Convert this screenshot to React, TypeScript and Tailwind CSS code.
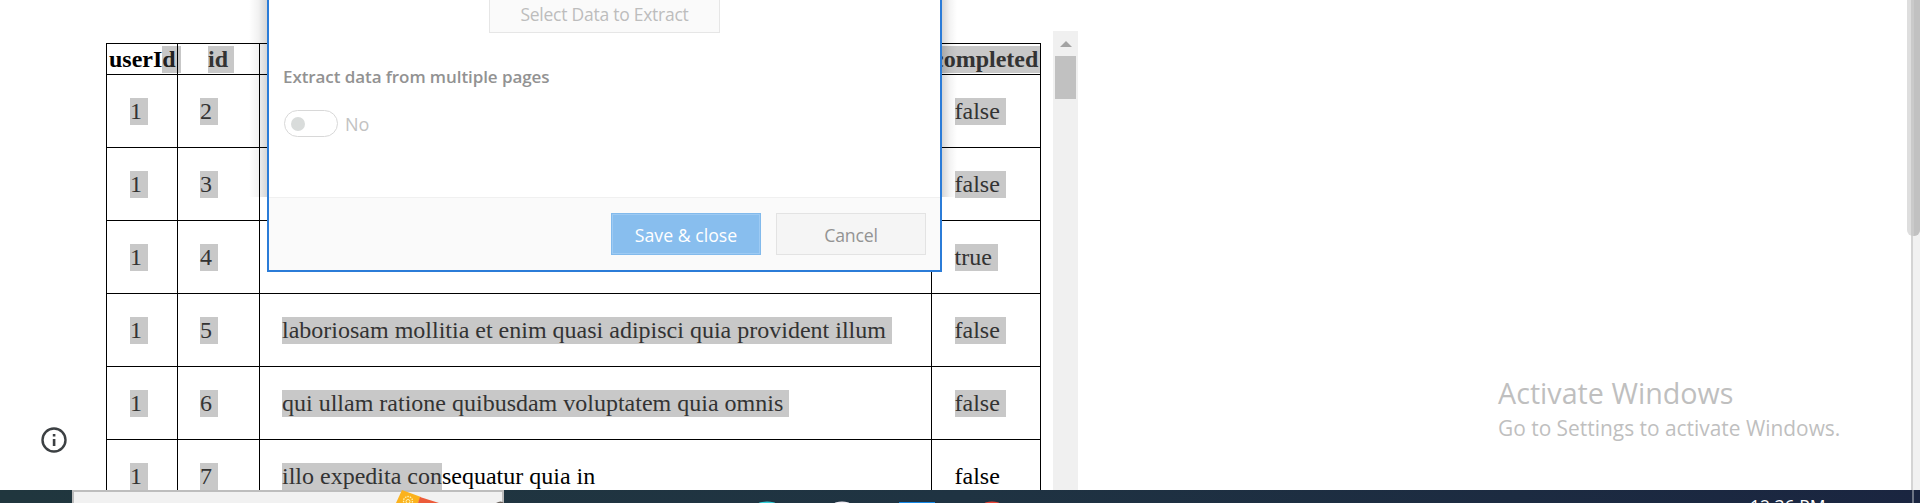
import React from "react";

const rows: { id: string; title: React.ReactNode; done: string; sel: boolean }[] = [
  { id: "2", title: "", done: "false", sel: true },
  { id: "3", title: "", done: "false", sel: true },
  { id: "4", title: "", done: "true", sel: true },
  { id: "5", title: <Mark>laboriosam mollitia et enim quasi adipisci quia provident illum </Mark>, done: "false", sel: true },
  { id: "6", title: <Mark>qui ullam ratione quibusdam voluptatem quia omnis </Mark>, done: "false", sel: true },
  { id: "7", title: <><Mark>illo expedita con</Mark>sequatur quia in</>, done: "false", sel: false },
];

function Mark({ children }: { children: React.ReactNode }) {
  return <span className="inline-block h-[27px] bg-[#c8c8c8] text-[#333] whitespace-pre">{children}</span>;
}

const cell = "border-r border-black shrink-0 whitespace-pre";

function DataTable() {
  return (
    <div className="ml-[106px] mt-[43px] w-[935px] shrink-0 border-l border-t border-black font-['Liberation_Serif',serif] text-[24px] leading-[27px] text-black">
      <div className="flex h-[31px] border-b border-black font-bold">
        <div className={`${cell} w-[71px] pl-[2px] pt-[2px]`}>userI<span className="relative inline-block h-[27px] w-[19px] bg-black/22 text-[#222]">d</span></div>
        <div className={`${cell} w-[82px] pl-[30px] pt-[2px]`}><Mark>id </Mark></div>
        <div className={`${cell} w-[672px]`} />
        <div className={`${cell} w-[109px] pt-[2px]`}><span className="block h-[27px] bg-[#c8c8c8] pl-[1px] text-[#333]">completed</span></div>
      </div>
      {rows.map((r) => (
        <div key={r.id} className="flex h-[73px] border-b border-black">
          <div className={`${cell} w-[71px] pl-[23px] pt-[23px]`}><Mark>1 </Mark></div>
          <div className={`${cell} w-[82px] pl-[22px] pt-[23px]`}><Mark>{r.id + " "}</Mark></div>
          <div className={`${cell} w-[672px] pl-[22px] pt-[23px]`}>{r.title}</div>
          <div className={`${cell} w-[109px] pl-[22.5px] pt-[23px]`}>{r.sel ? <Mark>{r.done + " "}</Mark> : r.done}</div>
        </div>
      ))}
    </div>
  );
}

function Dialog() {
  return (
    <div className="absolute left-[249px] top-0 flex">
      <div className="h-[197px] w-[18px] bg-linear-to-r from-black/0 via-black/5 to-black/16" />
      <div className="flex h-[272px] w-[675px] flex-col border-x-2 border-b-2 border-[#2b7cd8] bg-white font-['Open_Sans',sans-serif]">
        <div className="ml-[220px] flex h-[33px] w-[231px] items-start justify-center border-x border-b border-[#e6e6e6] bg-[#fafafa] text-[17.5px] leading-[28px] tracking-[-0.25px] text-[#bdbdbd]">
          <span className="whitespace-nowrap">Select Data to Extract</span>
        </div>
        <div className="ml-[14px] mt-[31px] h-[26px] whitespace-nowrap text-[17px] font-semibold leading-[26px] tracking-[-0.08px] text-[#929292]"><span>Extract data from multiple pages</span></div>
        <div className="ml-[15px] mt-[20px] flex h-[27px] items-center">
          <div className="flex h-[27px] w-[54px] items-center rounded-full border border-[#d8d8d8] pl-[6px]">
            <div className="size-[14px] rounded-full bg-[#d9dcdb]" />
          </div>
          <span className="ml-[7px] mt-[2px] text-[18px] leading-[27px] text-[#c2c2c2]">No</span>
        </div>
        <div className="mt-auto flex h-[73px] justify-end gap-[15px] border-t border-[#f0f0f0] bg-[#fafafa] pr-[14px] pt-[15px] text-[17.7px]">
          <div className="flex h-[42px] w-[150px] items-center justify-center border border-[#82baec] bg-[#88beee] pt-[3px] text-white outline-1 -outline-offset-2 outline-[#9dcaf3]"><span>Save &amp; close</span></div>
          <div className="flex h-[42px] w-[150px] items-center justify-center border border-[#e3e3e3] bg-[#f5f5f5] pt-[3px] tracking-[-0.2px] text-[#939393]"><span>Cancel</span></div>
        </div>
      </div>
      <div className="h-[197px] w-[15px] bg-linear-to-l from-black/0 via-black/5 to-black/16" />
    </div>
  );
}

function Taskbar() {
  return (
    <div className="absolute inset-x-0 top-[490px] flex h-[13px] overflow-hidden bg-linear-to-r from-[#20363e] via-[#1f3342] to-[#1a2540]">
      <div className="ml-[72px] h-[20px] w-[432px] border-2 border-[#bdbdbd] bg-[#f1f1f1]" />
      <svg className="absolute left-[390px] top-0" width="120" height="13" viewBox="0 0 120 13">
        <path d="M12 0L31 7L28 13H6Z" fill="#fbb21d" />
        <path d="M30 7L49 13H28Z" fill="#ec5b3a" />
        <circle cx="18" cy="11" r="4.5" fill="none" stroke="#fff3b0" strokeWidth="1.3" strokeDasharray="1.5 1" />
        <circle cx="18" cy="11.5" r="2" fill="none" stroke="#fff3b0" strokeWidth="1" />
        <path d="M106 13Q111 10 114 13Z" fill="#6b625c" />
      </svg>
      <svg className="absolute left-[750px] top-[11px]" width="260" height="2" viewBox="0 0 260 2">
        <ellipse cx="17" cy="3" rx="9" ry="2.5" fill="#32d1dc" />
        <ellipse cx="92" cy="3" rx="8" ry="2.5" fill="#f1edf5" />
        <path d="M149 1h36v1h-36z" fill="#1489e8" />
        <ellipse cx="242" cy="3" rx="8" ry="2.5" fill="#ea4335" />
      </svg>
      <span className="absolute left-[1750px] top-[4px] whitespace-nowrap font-['Open_Sans',sans-serif] text-[17.5px] leading-[24px] text-white">12:36 PM</span>
    </div>
  );
}

export default function App() {
  return (
    <div className="relative flex h-[503px] w-[1920px] items-start overflow-hidden bg-white">
      <DataTable />
      <div className="ml-[12px] mt-[31px] flex h-[459px] w-[25px] flex-col items-center bg-[#f0f0f0]">
        <svg className="mt-[10px]" width="12" height="6" viewBox="0 0 12 6"><path d="M0 6L6 0L12 6Z" fill="#a3a3a3" /></svg>
        <div className="mt-[9px] h-[43px] w-[21px] bg-[#c1c1c1]" />
      </div>
      <svg className="absolute left-[41px] top-[427px]" width="26" height="26" viewBox="0 0 26 26" fill="none">
        <circle cx="13" cy="13" r="11.5" stroke="#3c4043" strokeWidth="2.4" />
        <path d="M11.8 12h2.6v7h-2.6zM11.8 7h2.6v2.5h-2.6z" fill="#3c4043" />
      </svg>
      <div className="absolute left-[1498px] top-[373px] flex flex-col whitespace-nowrap font-['Open_Sans',sans-serif] text-[#bfbfbf]">
        <span className="text-[28.7px] leading-[40px]">Activate Windows</span>
        <span className="text-[20.9px] leading-[31px]">Go to Settings to activate Windows.</span>
      </div>
      <div className="absolute left-[1911px] top-0 h-[490px] w-[9px] border-l-2 border-[#d4d4d4] bg-[#f1f1f1]" />
      <div className="absolute left-[1907px] top-0 flex h-[236px] w-[13px] overflow-hidden rounded-b-[6px] bg-[#dedede]">
        <div className="ml-[4px] w-[3px] bg-[#cacaca]" /><div className="grow bg-[#c1c1c1]" />
      </div>
      <Dialog />
      <Taskbar />
      <div className="absolute left-[1912px] top-[490px] h-[13px] w-[2px] bg-[#6c7484]" />
    </div>
  );
}
